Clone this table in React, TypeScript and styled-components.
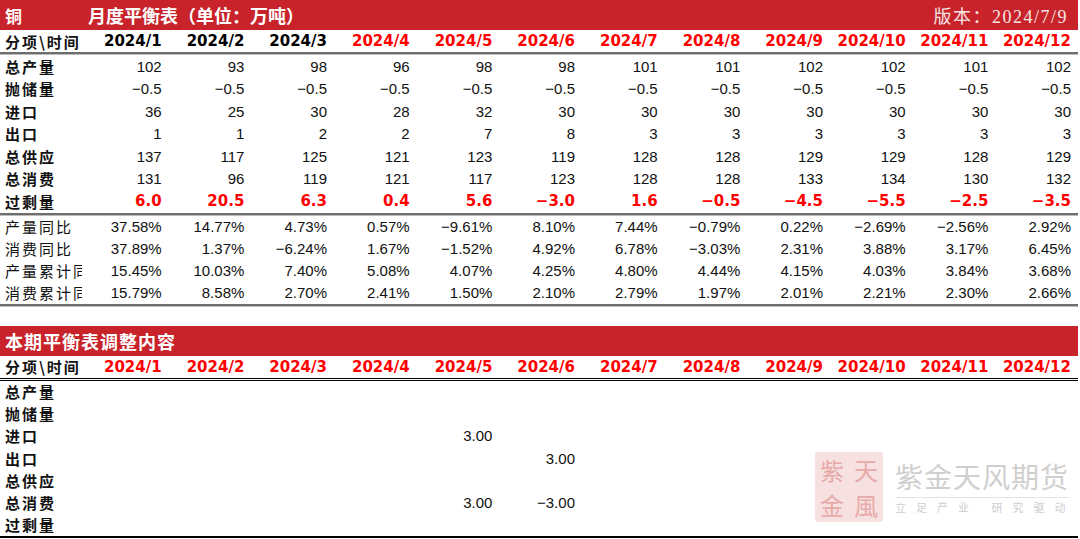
import styled, { createGlobalStyle } from 'styled-components';

const GlobalStyle = createGlobalStyle`
    html, body {
        margin: 0;
        padding: 0;
        background: #fff;
    }
    body {
        width: 1080px;
        height: 539px;
        overflow: hidden;
        font-family: "Liberation Sans", Arial, sans-serif;
    }
`;

const months = Array.from({ length: 12 }, (_, i) => `2024/${i + 1}`);

const supplyRows: { label: string; values: string[]; surplus?: boolean }[] = [
    { label: '总产量', values: ['102', '93', '98', '96', '98', '98', '101', '101', '102', '102', '101', '102'] },
    { label: '抛储量', values: Array(12).fill('−0.5') },
    { label: '进口', values: ['36', '25', '30', '28', '32', '30', '30', '30', '30', '30', '30', '30'] },
    { label: '出口', values: ['1', '1', '2', '2', '7', '8', '3', '3', '3', '3', '3', '3'] },
    { label: '总供应', values: ['137', '117', '125', '121', '123', '119', '128', '128', '129', '129', '128', '129'] },
    { label: '总消费', values: ['131', '96', '119', '121', '117', '123', '128', '128', '133', '134', '130', '132'] },
    {
        label: '过剩量',
        surplus: true,
        values: ['6.0', '20.5', '6.3', '0.4', '5.6', '−3.0', '1.6', '−0.5', '−4.5', '−5.5', '−2.5', '−3.5'],
    },
];

const ratioRows = [
    { label: '产量同比', values: ['37.58%', '14.77%', '4.73%', '0.57%', '−9.61%', '8.10%', '7.44%', '−0.79%', '0.22%', '−2.69%', '−2.56%', '2.92%'] },
    { label: '消费同比', values: ['37.89%', '1.37%', '−6.24%', '1.67%', '−1.52%', '4.92%', '6.78%', '−3.03%', '2.31%', '3.88%', '3.17%', '6.45%'] },
    { label: '产量累计同比', values: ['15.45%', '10.03%', '7.40%', '5.08%', '4.07%', '4.25%', '4.80%', '4.44%', '4.15%', '4.03%', '3.84%', '3.68%'] },
    { label: '消费累计同比', values: ['15.79%', '8.58%', '2.70%', '2.41%', '1.50%', '2.10%', '2.79%', '1.97%', '2.01%', '2.21%', '2.30%', '2.66%'] },
];

const adjustRows: { label: string; values: Record<number, string> }[] = [
    { label: '总产量', values: {} },
    { label: '抛储量', values: {} },
    { label: '进口', values: { 4: '3.00' } },
    { label: '出口', values: { 5: '3.00' } },
    { label: '总供应', values: {} },
    { label: '总消费', values: { 4: '3.00', 5: '−3.00' } },
    { label: '过剩量', values: {} },
];

const Page = styled.div`
    position: relative;
    width: 1080px;
    height: 539px;
    overflow: hidden;
`;

const Section = styled.section<{ $gap?: number }>`
    margin-top: ${p => p.$gap || 0}px;
    width: 1078px;
`;

const TitleBar = styled.div`
    height: 30px;
    background: #c8232a;
    display: flex;
    align-items: center;
    padding: 0 10px 0 5px;
    color: #fff;
    font-family: "Noto Sans CJK SC", sans-serif;
    font-weight: 700;
`;

const Metal = styled.div`
    width: 83px;
    font-size: 17px;
`;

const Title = styled.div<{ $spacing?: number }>`
    font-size: 18px;
    letter-spacing: ${p => p.$spacing || 0}px;
    flex: 1;
`;

const Version = styled.div`
    font-family: "Liberation Serif", "Noto Sans CJK SC", serif;
    font-weight: 400;
    font-size: 18px;
    letter-spacing: 1.5px;
    color: #f6e4e4;
`;

const Grid = styled.div<{ $h: number }>`
    display: grid;
    grid-template-columns: 86px repeat(12, 1fr);
    height: ${p => p.$h}px;
    align-items: center;
`;

const HeaderRow = styled(Grid)<{ $black?: boolean }>`
    border-bottom: ${p => (p.$black ? '3px double #000' : '2px solid #6e6e6e')};
    box-shadow: ${p => (p.$black ? 'none' : '0 1px 0 #bcbcbc')};
    margin-bottom: ${p => (p.$black ? 0 : 1)}px;
`;

const Group = styled.div<{ $black?: boolean }>`
    border-bottom: ${p => (p.$black ? '2px solid #000' : '2px solid #6e6e6e')};
    box-shadow: ${p => (p.$black ? 'none' : '0 1px 0 #bcbcbc')};
    margin-bottom: ${p => (p.$black ? 0 : 1)}px;
`;

const Label = styled.div<{ $bold?: boolean }>`
    box-sizing: border-box;
    width: 82px;
    padding-left: 5px;
    font-family: "Noto Sans CJK SC", sans-serif;
    font-size: 15px;
    font-weight: ${p => (p.$bold ? 700 : 400)};
    letter-spacing: 2px;
    white-space: nowrap;
    overflow: hidden;
    color: #111;
`;

const YearCell = styled.div<{ $red?: boolean }>`
    text-align: right;
    padding-right: 7px;
    font-family: "DejaVu Sans", sans-serif;
    font-weight: 700;
    font-size: 15px;
    color: ${p => (p.$red ? '#ff0000' : '#000')};
`;

const Cell = styled.div<{ $surplus?: boolean }>`
    text-align: right;
    padding-right: 7px;
    font-family: ${p => (p.$surplus ? '"DejaVu Sans", sans-serif' : '"Liberation Sans", Arial, sans-serif')};
    font-weight: ${p => (p.$surplus ? 700 : 400)};
    font-size: 15px;
    color: ${p => (p.$surplus ? '#ff0000' : '#111')};
    white-space: nowrap;
`;

const Watermark = styled.div`
    position: absolute;
    left: 815px;
    top: 452px;
    display: flex;
    align-items: center;
    gap: 12px;
    pointer-events: none;
`;

const Seal = styled.div`
    width: 68px;
    height: 70px;
    background: #f7e0e0;
    border-radius: 3px;
    display: grid;
    grid-template-columns: 1fr 1fr;
    grid-template-rows: 1fr 1fr;
    place-items: center;
    font-family: "Noto Sans CJK TC", sans-serif;
    font-size: 24px;
    line-height: 1;
    color: #e7aaaa;
`;

const Brand = styled.div`
    display: flex;
    flex-direction: column;
    width: 174px;
`;

const BrandName = styled.div`
    font-family: "Noto Sans CJK SC", sans-serif;
    font-size: 28px;
    line-height: 34px;
    letter-spacing: 1px;
    color: #cfcfcf;
    border-bottom: 1px solid #e2e2e2;
    padding-bottom: 4px;
`;

const Slogan = styled.div`
    font-family: "Noto Sans CJK SC", sans-serif;
    font-size: 11px;
    line-height: 18px;
    letter-spacing: 10px;
    color: #cdcdcd;
    white-space: nowrap;
`;

export default function App() {
    return (
        <Page>
            <GlobalStyle />
            <Section>
                <TitleBar>
                    <Metal>铜</Metal>
                    <Title>月度平衡表（单位：万吨）</Title>
                    <Version>版本：2024/7/9</Version>
                </TitleBar>
                <HeaderRow $h={22}>
                    <Label $bold>分项\时间</Label>
                    {months.map((m, i) => (
                        <YearCell key={m} $red={i >= 3}>{m}</YearCell>
                    ))}
                </HeaderRow>
                <Group>
                    {supplyRows.map(row => (
                        <Grid key={row.label} $h={22.5}>
                            <Label $bold>{row.label}</Label>
                            {row.values.map((v, i) => (
                                <Cell key={i} $surplus={row.surplus}>{v}</Cell>
                            ))}
                        </Grid>
                    ))}
                </Group>
                <Group>
                    {ratioRows.map(row => (
                        <Grid key={row.label} $h={22}>
                            <Label>{row.label}</Label>
                            {row.values.map((v, i) => (
                                <Cell key={i}>{v}</Cell>
                            ))}
                        </Grid>
                    ))}
                </Group>
            </Section>
            <Section $gap={20}>
                <TitleBar>
                    <Title $spacing={1}>本期平衡表调整内容</Title>
                </TitleBar>
                <HeaderRow $h={22} $black>
                    <Label $bold>分项\时间</Label>
                    {months.map(m => (
                        <YearCell key={m} $red>{m}</YearCell>
                    ))}
                </HeaderRow>
                <Group $black>
                    {adjustRows.map(row => (
                        <Grid key={row.label} $h={22.2}>
                            <Label $bold>{row.label}</Label>
                            {months.map((m, i) => (
                                <Cell key={m}>{row.values[i] || ''}</Cell>
                            ))}
                        </Grid>
                    ))}
                </Group>
            </Section>
            <Watermark>
                <Seal>
                    <span>紫</span>
                    <span>天</span>
                    <span>金</span>
                    <span>風</span>
                </Seal>
                <Brand>
                    <BrandName>紫金天风期货</BrandName>
                    <Slogan>立足产业 研究驱动</Slogan>
                </Brand>
            </Watermark>
        </Page>
    );
}
